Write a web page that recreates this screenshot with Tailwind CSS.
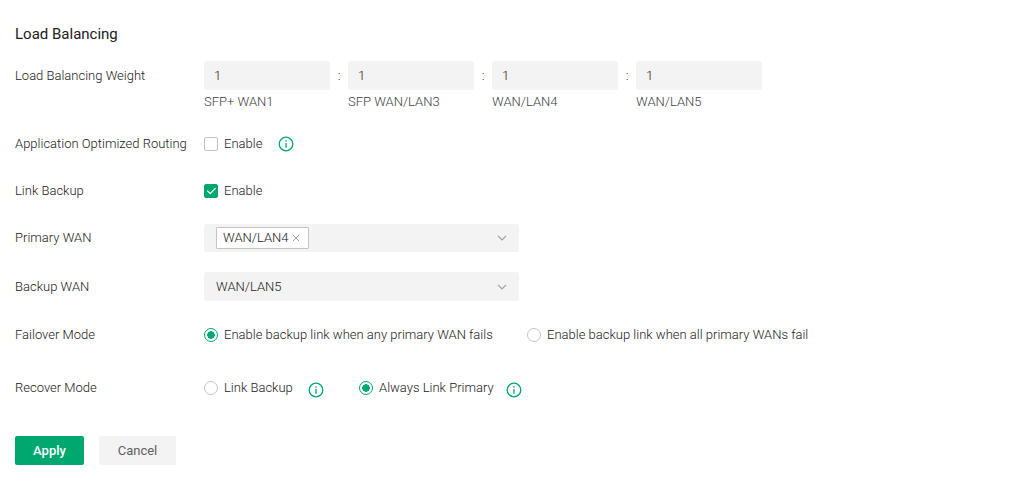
<!DOCTYPE html>
<html lang="en">
<head>
    <meta charset="UTF-8">
    <meta name="viewport" content="width=device-width, initial-scale=1.0">
    <title>Load Balancing</title>
    <!-- Tailwind CSS for styling -->
    <script src="https://cdn.jsdelivr.net/npm/@tailwindcss/browser@4"></script>
    <style>
        body {
            font-family: Roboto, 'Liberation Sans', sans-serif;
        }
    </style>
</head>
<body class="bg-white text-[13px] leading-5 font-light text-[#212121]">

    <!-- Shared icons -->
    <svg class="hidden">
        <symbol id="icon-info" viewBox="0 0 16 16">
            <circle cx="8" cy="8" r="6.8" fill="none" stroke="currentColor" stroke-width="1.3"/>
            <path d="M8 4.3v1.4M8 7v4.8" fill="none" stroke="currentColor" stroke-width="1.3"/>
        </symbol>
        <symbol id="icon-chevron" viewBox="0 0 10 6">
            <path d="M1 0.8l4 4 4-4" fill="none" stroke="currentColor" stroke-width="1.2"/>
        </symbol>
    </svg>

    <form class="px-[15px] pt-6 pb-4">

        <h1 class="text-[15px] leading-5 font-normal text-[#212121]">Load Balancing</h1>

        <!-- Load Balancing Weight -->
        <div class="mt-[17px] flex">
            <span class="w-[189px] shrink-0 leading-[29px]">Load Balancing Weight</span>
            <div class="flex">
                <div class="flex w-[126px] flex-col">
                    <input id="weight-wan1" type="text" value="1" class="h-[29px] w-full rounded-[3px] bg-[#f3f3f3] px-[10px] outline-none">
                    <label for="weight-wan1" class="mt-[2px] text-[#424242]">SFP+ WAN1</label>
                </div>
                <span class="w-[18px] text-center leading-[29px]">:</span>
                <div class="flex w-[126px] flex-col">
                    <input id="weight-lan3" type="text" value="1" class="h-[29px] w-full rounded-[3px] bg-[#f3f3f3] px-[10px] outline-none">
                    <label for="weight-lan3" class="mt-[2px] text-[#424242]">SFP WAN/LAN3</label>
                </div>
                <span class="w-[18px] text-center leading-[29px]">:</span>
                <div class="flex w-[126px] flex-col">
                    <input id="weight-lan4" type="text" value="1" class="h-[29px] w-full rounded-[3px] bg-[#f3f3f3] px-[10px] outline-none">
                    <label for="weight-lan4" class="mt-[2px] text-[#424242]">WAN/LAN4</label>
                </div>
                <span class="w-[18px] text-center leading-[29px]">:</span>
                <div class="flex w-[126px] flex-col">
                    <input id="weight-lan5" type="text" value="1" class="h-[29px] w-full rounded-[3px] bg-[#f3f3f3] px-[10px] outline-none">
                    <label for="weight-lan5" class="mt-[2px] text-[#424242]">WAN/LAN5</label>
                </div>
            </div>
        </div>

        <!-- Application Optimized Routing -->
        <div class="mt-[22px] flex items-center">
            <span class="w-[189px] shrink-0">Application Optimized Routing</span>
            <label class="flex items-center gap-[6px]">
                <input type="checkbox" class="size-[14px] appearance-none rounded-[2px] border border-[#c4c4c4] bg-white">
                Enable
            </label>
            <button type="button" aria-label="About application optimized routing" class="ml-4 text-[#00a870]">
                <svg class="size-4"><use href="#icon-info"/></svg>
            </button>
        </div>

        <!-- Link Backup -->
        <div class="mt-[27px] flex items-center">
            <span class="w-[189px] shrink-0">Link Backup</span>
            <label class="flex items-center gap-[6px]">
                <span class="grid size-[14px]">
                    <input type="checkbox" checked class="col-start-1 row-start-1 size-[14px] appearance-none rounded-[2px] border border-[#c4c4c4] bg-white checked:border-[#00a870] checked:bg-[#00a870]">
                    <svg viewBox="0 0 14 14" class="pointer-events-none col-start-1 row-start-1 size-[14px]" fill="none" stroke="#fff" stroke-width="1.2"><path d="M3.2 6.6l3 3.1 5.4-5.5"/></svg>
                </span>
                Enable
            </label>
        </div>

        <!-- Primary WAN -->
        <div class="mt-[23px] flex items-center">
            <span id="primary-label" class="w-[189px] shrink-0">Primary WAN</span>
            <div role="combobox" tabindex="0" aria-labelledby="primary-label" aria-expanded="false" class="flex h-7 w-full max-w-[315px] items-center justify-between rounded-[3px] bg-[#f3f3f3] px-3">
                <span class="flex h-[22px] w-[93px] items-center justify-between rounded-[1px] border border-[#c4c4c4] bg-white pr-2 pl-[6px]">
                    WAN/LAN4
                    <button type="button" aria-label="Remove WAN/LAN4" class="text-[#9e9e9e]">
                        <svg viewBox="0 0 8 8" class="size-2" fill="none" stroke="currentColor"><path d="M0.8 0.8l6.4 6.4M7.2 0.8l-6.4 6.4"/></svg>
                    </button>
                </span>
                <svg class="h-[6px] w-[10px] text-[#9e9e9e]"><use href="#icon-chevron"/></svg>
            </div>
        </div>

        <!-- Backup WAN -->
        <div class="mt-5 flex items-center">
            <label for="backup-wan" class="w-[189px] shrink-0">Backup WAN</label>
            <div class="grid w-full max-w-[315px] items-center">
                <select id="backup-wan" class="col-start-1 row-start-1 h-[29px] w-full appearance-none rounded-[3px] bg-[#f3f3f3] px-3 outline-none">
                    <option>WAN/LAN5</option>
                </select>
                <svg class="pointer-events-none col-start-1 row-start-1 mr-3 h-[6px] w-[10px] justify-self-end text-[#9e9e9e]"><use href="#icon-chevron"/></svg>
            </div>
        </div>

        <!-- Failover Mode -->
        <div class="mt-6 flex items-center" role="radiogroup" aria-label="Failover Mode">
            <span class="w-[189px] shrink-0">Failover Mode</span>
            <label class="flex w-[323px] items-center gap-[6px]">
                <input type="radio" name="failover" checked class="size-[14px] appearance-none rounded-full border border-[#c4c4c4] bg-white checked:border-[#00a870] checked:bg-[radial-gradient(circle,#00a870_3.5px,transparent_4px)]">
                Enable backup link when any primary WAN fails
            </label>
            <label class="flex items-center gap-[6px]">
                <input type="radio" name="failover" class="size-[14px] appearance-none rounded-full border border-[#c4c4c4] bg-white checked:border-[#00a870] checked:bg-[radial-gradient(circle,#00a870_3.5px,transparent_4px)]">
                Enable backup link when all primary WANs fail
            </label>
        </div>

        <!-- Recover Mode -->
        <div class="mt-[33px] flex items-center" role="radiogroup" aria-label="Recover Mode">
            <span class="w-[189px] shrink-0">Recover Mode</span>
            <div class="flex w-[155px] items-center">
                <label class="flex w-[104px] items-center gap-[6px]">
                    <input type="radio" name="recover" class="size-[14px] appearance-none rounded-full border border-[#c4c4c4] bg-white checked:border-[#00a870] checked:bg-[radial-gradient(circle,#00a870_3.5px,transparent_4px)]">
                    Link Backup
                </label>
                <button type="button" aria-label="About link backup" class="pt-1 text-[#00a870]">
                    <svg class="size-4"><use href="#icon-info"/></svg>
                </button>
            </div>
            <div class="flex items-center">
                <label class="flex w-[147px] items-center gap-[6px]">
                    <input type="radio" name="recover" checked class="size-[14px] appearance-none rounded-full border border-[#c4c4c4] bg-white checked:border-[#00a870] checked:bg-[radial-gradient(circle,#00a870_3.5px,transparent_4px)]">
                    Always Link Primary
                </label>
                <button type="button" aria-label="About always link primary" class="pt-1 text-[#00a870]">
                    <svg class="size-4"><use href="#icon-info"/></svg>
                </button>
            </div>
        </div>

        <!-- Actions -->
        <div class="mt-[38px] flex gap-[15px]">
            <button type="submit" class="h-[29px] w-[69px] rounded-[2px] bg-[#00a870] font-medium text-white">Apply</button>
            <button type="button" class="h-[29px] w-[77px] rounded-[2px] bg-[#f3f3f3] font-normal text-[#616161]">Cancel</button>
        </div>
    </form>

</body>
</html>
